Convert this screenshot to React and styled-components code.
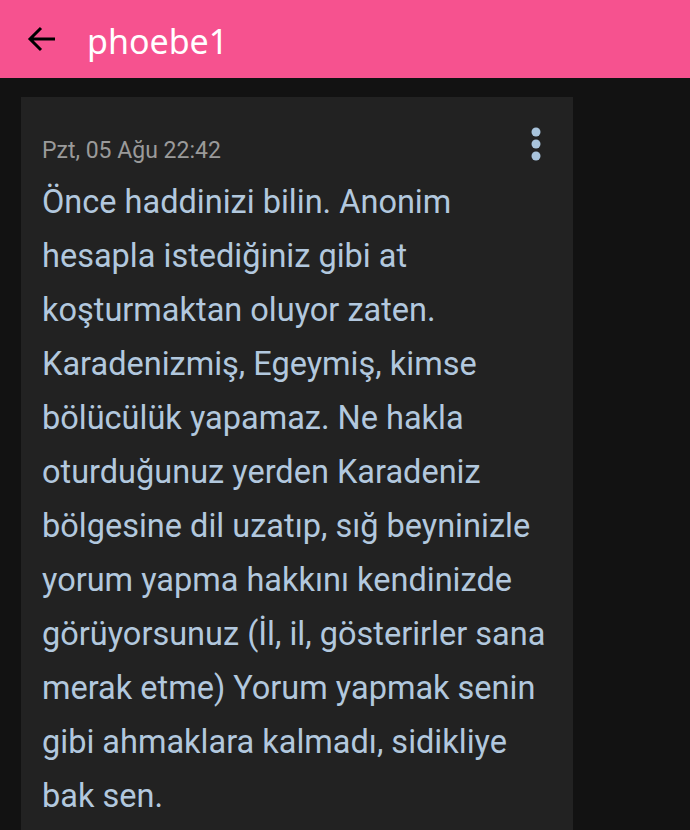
import React from 'react';
import styled, { createGlobalStyle } from 'styled-components';

const GlobalStyle = createGlobalStyle`
  html, body {
    margin: 0;
    padding: 0;
    background: #121212;
  }
  body {
    font-family: Roboto, 'Noto Sans', sans-serif;
  }
`;

const Page = styled.div`
  height: 830px;
  background: #121212;
  overflow: hidden;
`;

const TopBar = styled.header`
  height: 78px;
  background: #f6528f;
  display: flex;
  align-items: center;
  padding: 0 0 0 24px;
  box-sizing: border-box;
`;

const BackButton = styled.button`
  border: none;
  background: none;
  padding: 0;
  margin: 0 27px 0 0;
  width: 36px;
  height: 36px;
  display: flex;
  align-items: center;
  justify-content: center;
  cursor: pointer;
`;

const Title = styled.h1`
  margin: 0;
  color: #ffffff;
  font-family: 'Noto Sans', 'Open Sans', sans-serif;
  font-weight: 400;
  font-size: 34px;
  position: relative;
  top: 2px;
`;

const Content = styled.main`
  padding: 19px 0 0 21px;
`;

const Card = styled.article`
  width: 552px;
  background: #222222;
  padding: 33px 21px 20px 21px;
  box-sizing: border-box;
`;

const CardHeader = styled.div`
  display: flex;
  align-items: center;
  justify-content: space-between;
`;

const DateText = styled.span`
  color: #9a9a9a;
  font-size: 23px;
  font-family: Roboto, sans-serif;
`;

const MenuButton = styled.button`
  border: none;
  background: none;
  padding: 0;
  width: 24px;
  height: 40px;
  margin-right: 4px;
  position: relative;
  top: -6px;
  display: flex;
  align-items: center;
  justify-content: center;
`;

const Body = styled.p`
  margin: 5px 0 0 0;
  color: #b2c8de;
  font-family: Roboto, sans-serif;
  font-size: 32.5px;
  line-height: 54px;
`;

export default function App() {
  return (
    <Page>
      <GlobalStyle />
      <TopBar>
        <BackButton aria-label="back">
          <svg width="32" height="32" viewBox="0 0 32 32">
            <path d="M29 16H4M15 5L4 16l11 11" fill="none" stroke="#000" strokeWidth="3" strokeLinecap="butt" />
          </svg>
        </BackButton>
        <Title>phoebe1</Title>
      </TopBar>
      <Content>
        <Card>
          <CardHeader>
            <DateText>Pzt, 05 Ağu 22:42</DateText>
            <MenuButton aria-label="menu">
              <svg width="12" height="36" viewBox="0 0 12 36">
                <circle cx="6" cy="6" r="4.5" fill="#a9c4dc" />
                <circle cx="6" cy="18" r="4.5" fill="#a9c4dc" />
                <circle cx="6" cy="30" r="4.5" fill="#a9c4dc" />
              </svg>
            </MenuButton>
          </CardHeader>
          <Body>
            Önce haddinizi bilin. Anonim hesapla istediğiniz gibi at koşturmaktan oluyor zaten. Karadenizmiş, Egeymiş, kimse bölücülük yapamaz. Ne hakla oturduğunuz yerden Karadeniz bölgesine dil uzatıp, sığ beyninizle yorum yapma hakkını kendinizde görüyorsunuz (İl, il, gösterirler sana merak etme) Yorum yapmak senin gibi ahmaklara kalmadı, sidikliye bak sen.
          </Body>
        </Card>
      </Content>
    </Page>
  );
}
